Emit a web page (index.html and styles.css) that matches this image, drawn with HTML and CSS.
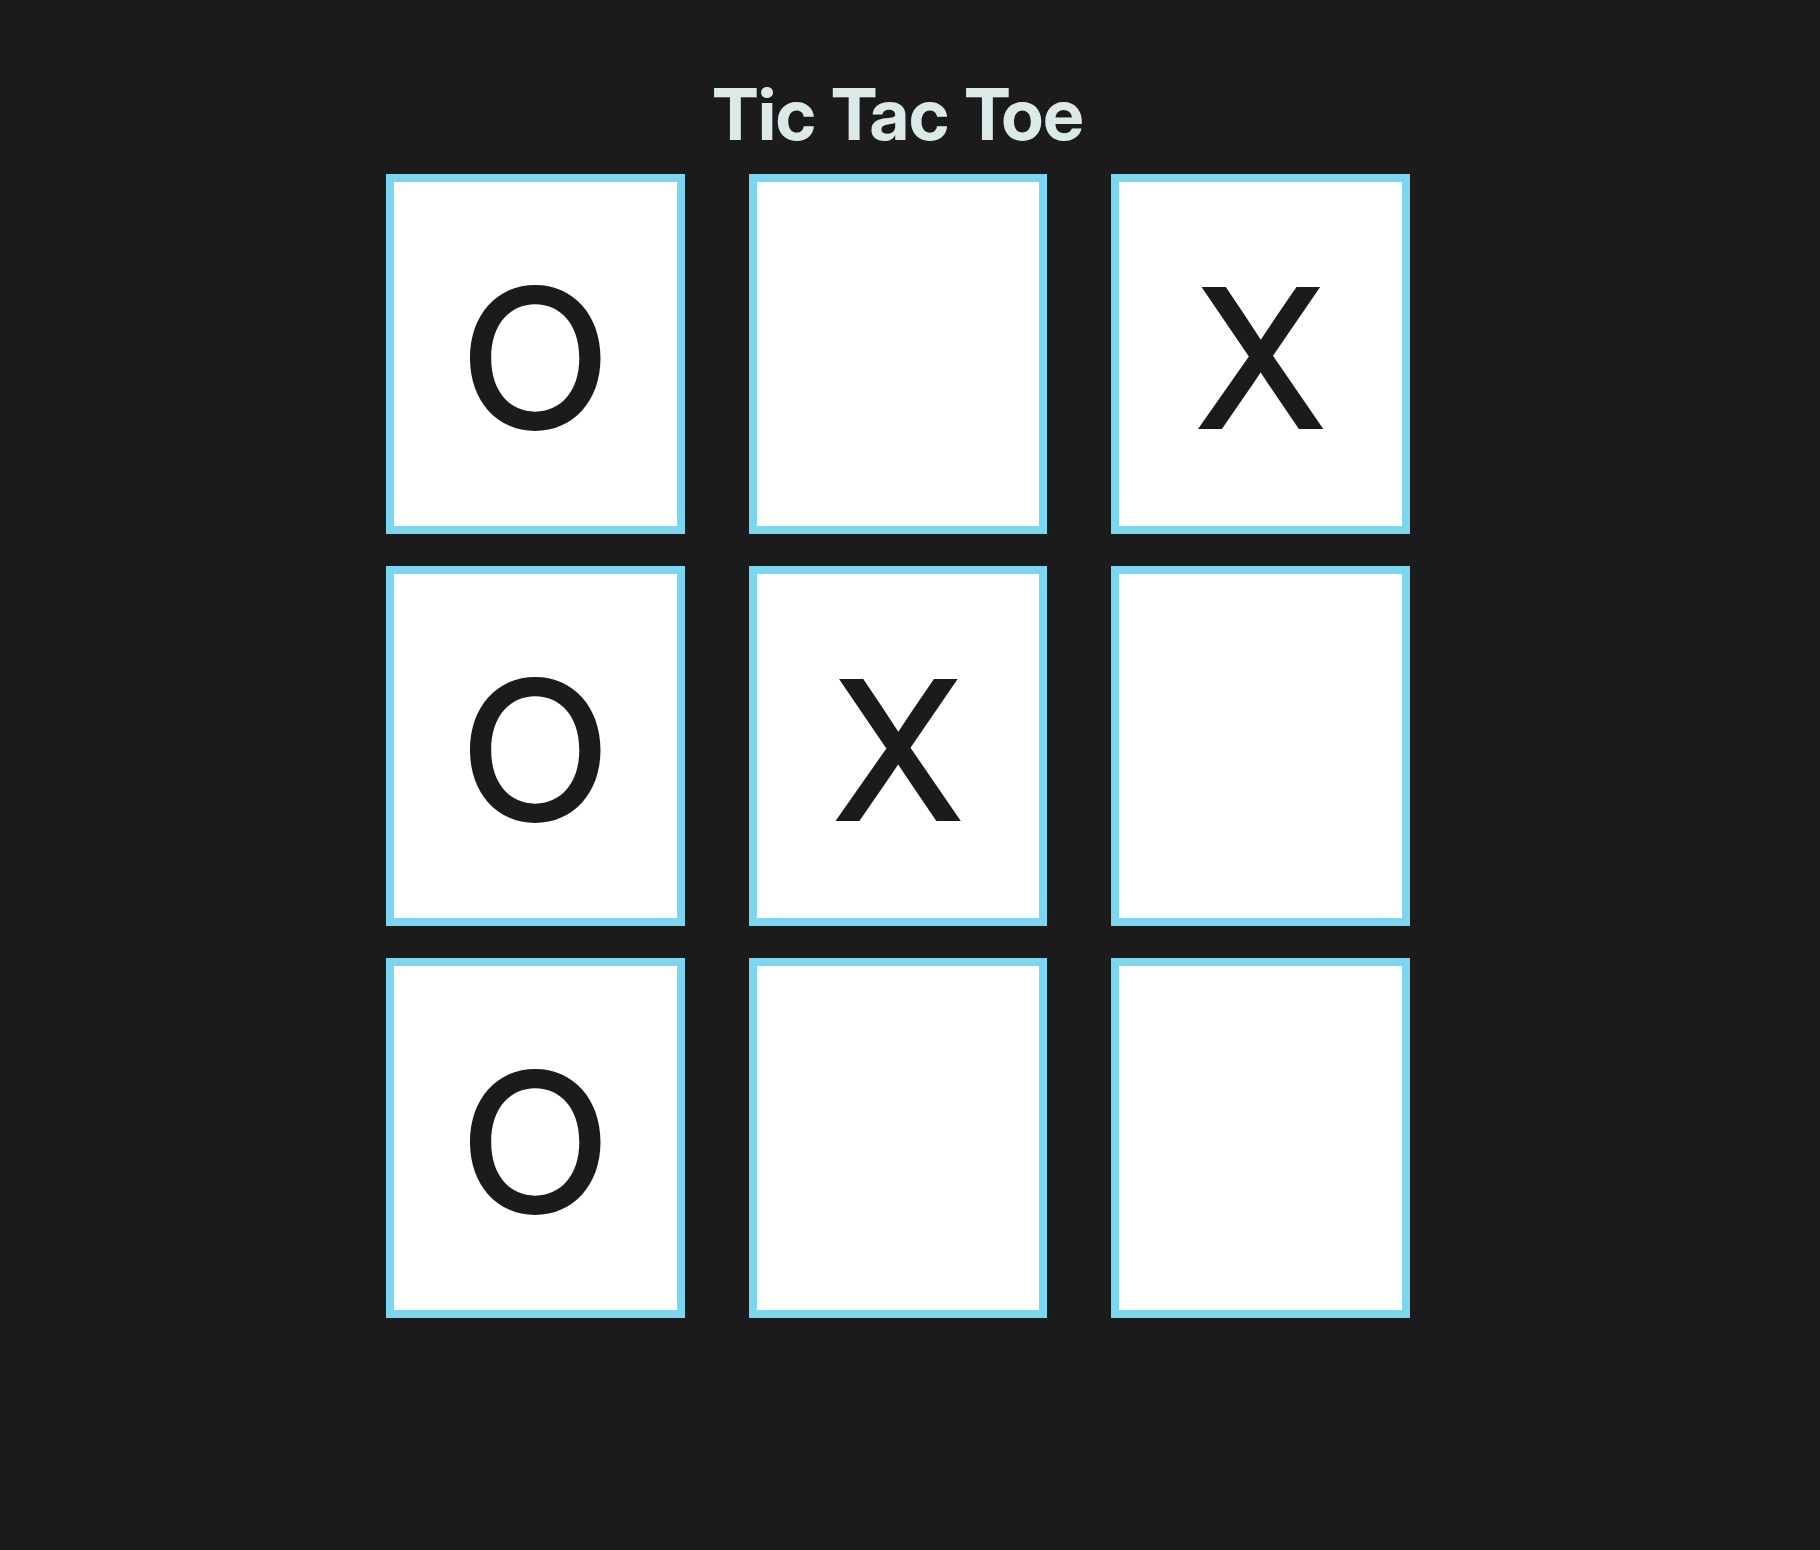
FILE: index.html
```html
<!DOCTYPE html>
<html lang="en">
<head>
<meta charset="utf-8">
<title>Tic Tac Toe</title>
<link rel="stylesheet" href="styles.css">
</head>
<body>
<main class="game">
  <h1 class="game-title">Tic Tac Toe</h1>
  <div class="board">
    <button class="cell">O</button>
    <button class="cell"></button>
    <button class="cell">X</button>
    <button class="cell">O</button>
    <button class="cell">X</button>
    <button class="cell"></button>
    <button class="cell">O</button>
    <button class="cell"></button>
    <button class="cell"></button>
  </div>
</main>
</body>
</html>
```

FILE: styles.css
```css
html, body {
  margin: 0;
  background: #1b1b1b;
}

body {
  min-height: 100vh;
  padding-right: 24px;
  font-family: "Inter Display", Inter, "Noto Sans", sans-serif;
}

.game {
  width: 1024px;
  margin: 0 auto;
  padding-top: 70px;
  display: flex;
  flex-direction: column;
  align-items: center;
}

.game-title {
  margin: 0;
  font-size: 72px;
  font-weight: 700;
  line-height: 87px;
  color: #dbe9e8;
}

.board {
  margin-top: 17px;
  width: 100%;
  display: grid;
  grid-template-columns: repeat(3, 1fr);
  grid-auto-rows: 360px;
  column-gap: 64px;
  row-gap: 32px;
}

.cell {
  box-sizing: border-box;
  margin: 0;
  padding: 8px 0 0;
  background: #ffffff;
  border: 8px solid #7ad7ef;
  color: #1b1b1b;
  font-family: "Inter Display", Inter, "Noto Sans", sans-serif;
  font-size: 195px;
  font-weight: 500;
  line-height: 1;
  display: flex;
  align-items: center;
  justify-content: center;
}
```
